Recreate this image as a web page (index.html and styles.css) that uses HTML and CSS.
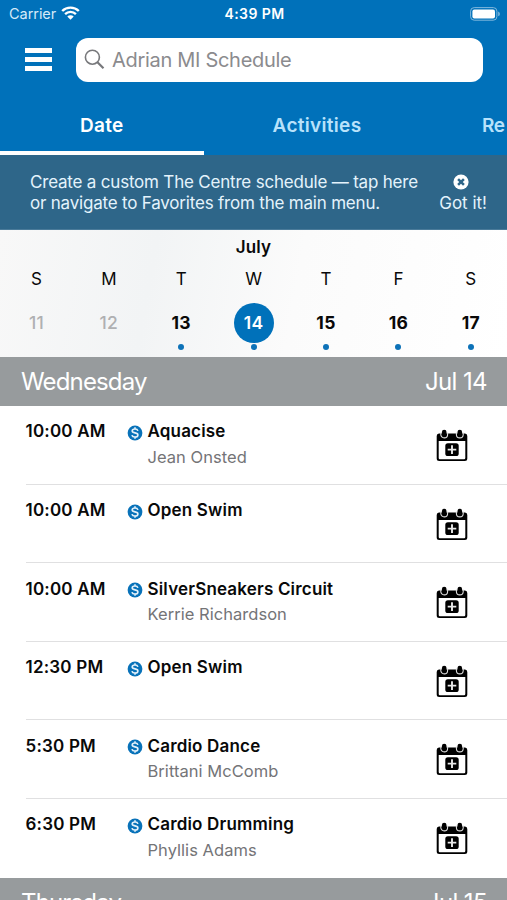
FILE: index.html
```html
<!DOCTYPE html>
<html lang="en">
<head>
<meta charset="utf-8">
<title>Schedule</title>
<link rel="stylesheet" href="styles.css">
</head>
<body>
<svg class="defs" width="0" height="0" aria-hidden="true">
  <symbol id="cal" viewBox="0 0 32 34">
    <path fill="#000" fill-rule="evenodd" d="M3 4.500H29Q31.300 4.500 31.300 7V29.500Q31.300 32 28.800 32H3.200Q.7 32 .7 29.500V7Q.7 4.500 3 4.500ZM2.700 11.900V29Q2.700 30.200 3.900 30.200H28.100Q29.300 30.200 29.300 29V11.900Z"/>
    <path fill="none" stroke="#ddd" stroke-width="1.100" d="M4.800 3.500V5.500A3.400 3.400 0 0 0 11.600 5.500V3.500M20.400 3.500V5.500A3.400 3.400 0 0 0 27.200 5.500V3.500"/>
    <rect x="5.900" y=".8" width="4.600" height="6.800" rx="2.300" fill="#000"/>
    <rect x="21.500" y=".8" width="4.600" height="6.800" rx="2.300" fill="#000"/>
    <rect x="9.300" y="14.200" width="13.400" height="12.800" rx="2.600" fill="#000"/>
    <path stroke="#e8e8e8" stroke-width="1.900" d="M16 16.300V24.900M11.700 20.600H20.300"/>
  </symbol>
  <symbol id="fee" viewBox="0 0 16 16">
    <circle cx="8" cy="8" r="7.400" fill="#0872b9"/>
    <path fill="none" stroke="#e4f1fa" stroke-width="1.600" d="M10.900 5.900C10.500 4.500 9.400 4 8 4C6.300 4 5.200 4.900 5.200 6C5.200 8.600 10.900 7.200 10.900 9.900C10.900 11.300 9.700 12 8 12C6.400 12 5.300 11.400 5 10.100M8 2.200V4.300M8 11.700V13.800"/>
  </symbol>
</svg>
<header class="top">
  <div class="status">
    <div class="carrier"><span>Carrier</span>
      <svg width="19" height="14" viewBox="0 0 19 14"><g fill="none" stroke="#fff" stroke-width="2.400"><path d="M1.200 5A11.800 11.800 0 0 1 17.800 5M4.100 8.100A7.700 7.700 0 0 1 14.900 8.100"/></g><path fill="#fff" d="M9.500 13.800L6.300 10.500A4.500 4.500 0 0 1 12.700 10.500Z"/></svg>
    </div>
    <div class="clock">4:39 PM</div>
    <svg class="battery" width="31" height="14" viewBox="0 0 31 14"><rect x=".6" y=".6" width="26.300" height="12.600" rx="3.600" fill="none" stroke="#7fb7dc"/><rect x="2.400" y="2.400" width="22.600" height="9" rx="2" fill="#fff"/><path fill="#7fb7dc" d="M28.200 4.500Q29.900 5.300 29.900 6.900T28.200 9.300Z"/></svg>
  </div>
  <div class="searchrow">
    <div class="menu"><i></i><i></i><i></i></div>
    <div class="search">
      <svg width="21" height="21" viewBox="0 0 21 21"><g fill="none" stroke="#77787b" stroke-width="1.600"><circle cx="8.400" cy="8.200" r="7"/><path stroke-width="2.200" d="M13.500 13.300L19.500 19.300"/></g></svg>
      <span>Adrian MI Schedule</span>
    </div>
  </div>
  <nav class="tabs">
    <div class="tab on">Date</div>
    <div class="tab mid">Activities</div>
    <div class="tab last">Re</div>
  </nav>
</header>
<section class="notice">
  <p>Create a custom The Centre schedule — tap here<br>or navigate to Favorites from the main menu.</p>
  <div class="got">
    <svg width="16" height="16" viewBox="0 0 16 16"><circle cx="8" cy="8" r="7.600" fill="#fff"/><path stroke="#2e6689" stroke-width="2.500" d="M5.100 5.100L10.900 10.900M10.900 5.100L5.100 10.900"/></svg>
    <span>Got it!</span>
  </div>
</section>
<section class="calendar">
  <div class="month">July</div>
  <div class="week names"><span>S</span><span>M</span><span>T</span><span>W</span><span>T</span><span>F</span><span>S</span></div>
  <div class="week days"><span class="off">11</span><span class="off">12</span><span>13</span><span><b>14</b></span><span>15</span><span>16</span><span>17</span></div>
  <div class="week dots"><span></span><span></span><span><i></i></span><span><i></i></span><span><i></i></span><span><i></i></span><span><i></i></span></div>
</section>
<div class="dayhead"><span>Wednesday</span><span>Jul 14</span></div>
<main>
  <article class="row"><div class="time">10:00 AM</div><svg class="fee"><use href="#fee"/></svg><div class="info"><h2>Aquacise</h2><p>Jean Onsted</p></div><svg class="cal"><use href="#cal"/></svg></article>
  <article class="row"><div class="time">10:00 AM</div><svg class="fee"><use href="#fee"/></svg><div class="info"><h2>Open Swim</h2></div><svg class="cal"><use href="#cal"/></svg></article>
  <article class="row"><div class="time">10:00 AM</div><svg class="fee"><use href="#fee"/></svg><div class="info"><h2>SilverSneakers Circuit</h2><p>Kerrie Richardson</p></div><svg class="cal"><use href="#cal"/></svg></article>
  <article class="row"><div class="time">12:30 PM</div><svg class="fee"><use href="#fee"/></svg><div class="info"><h2>Open Swim</h2></div><svg class="cal"><use href="#cal"/></svg></article>
  <article class="row"><div class="time">5:30 PM</div><svg class="fee"><use href="#fee"/></svg><div class="info"><h2>Cardio Dance</h2><p>Brittani McComb</p></div><svg class="cal"><use href="#cal"/></svg></article>
  <article class="row"><div class="time">6:30 PM</div><svg class="fee"><use href="#fee"/></svg><div class="info"><h2>Cardio Drumming</h2><p>Phyllis Adams</p></div><svg class="cal"><use href="#cal"/></svg></article>
</main>
<div class="dayhead"><span>Thursday</span><span>Jul 15</span></div>
</body>
</html>
```
FILE: styles.css
```css
* { box-sizing: border-box; margin: 0; padding: 0; }
html, body { height: 900px; overflow: hidden; }
body { font-family: Inter, "Liberation Sans", sans-serif; background: #fff; color: #090909; white-space: nowrap; }
svg { display: block; flex: none; }
.defs { position: absolute; }
.top { background: #0071ba; height: 155px; color: #fff; }
.status { display: grid; grid-template-columns: 1fr auto 1fr; height: 28px; align-items: center; padding: 0 6px 0 9px; font-size: 14.5px; }
.carrier { display: flex; align-items: center; gap: 5px; color: #d5eaf8; letter-spacing: -.05px; }
.carrier span { margin-top: -1px; }
.carrier svg { margin-top: -2px; }
.clock { font-weight: 600; font-size: 14px; letter-spacing: .4px; margin: -1px 0 0 -1px; }
.battery { justify-self: end; margin-top: -1px; }
.searchrow { display: flex; align-items: center; height: 64px; padding-left: 25px; }
.menu { width: 27px; display: grid; gap: 4.500px; margin-top: -1px; }
.menu i { height: 4.400px; background: #fff; }
.search { margin-left: 23.500px; width: 407px; height: 44px; border-radius: 12px; background: #fff; display: flex; align-items: center; padding-left: 8.500px; gap: 7px; color: #8b8b8e; font-size: 20px; letter-spacing: -.3px; }
.search svg { margin-top: -2px; }
.tabs { display: flex; height: 63px; font-size: 19px; font-weight: 600; letter-spacing: .3px; color: #b8e2fb; overflow: hidden; }
.tab { flex: none; height: 63px; line-height: 67px; text-align: center; }
.on { width: 203.500px; color: #fff; border-bottom: 4px solid #fff; }
.mid { width: 227px; }
.last { padding-left: 51.500px; letter-spacing: -.3px; }
.notice { height: 75px; background: #2e6689; color: #e4f3fc; display: flex; padding: 17px 20px 0 30px; justify-content: space-between; font-size: 17px; letter-spacing: -.2px; line-height: 20.500px; border-bottom: 1px solid #4a7b9a; }
.got { display: flex; flex-direction: column; align-items: center; gap: 2px; letter-spacing: 0; }
.got svg { margin: 1.500px 0 1px -5px; }
.calendar { height: 127px; background: linear-gradient(100deg, #f8f8f8, #f2f4f5 30%, #fbfbfb 58%, #fff); font-size: 17px; text-align: center; }
.month { font-weight: 600; height: 35px; line-height: 35px; letter-spacing: .2px; }
.week { display: grid; grid-template-columns: repeat(7, 72.400px); }
.week span { display: flex; justify-content: center; align-items: center; padding-left: .5px; }
.names { height: 28px; }
.days { height: 60px; font-weight: 650; letter-spacing: .3px; font-size: 17.500px; line-height: 22px; }
.days span { padding-bottom: 1px; }
.days .off { color: #afb0b2; font-weight: 500; }
.days b { width: 40px; height: 40px; line-height: 40px; border-radius: 50%; background: #0071ba; color: #fff; font-weight: 600; }
.dots { margin-top: -9px; height: 6px; }
.dots i { width: 6px; height: 6px; border-radius: 50%; background: #0d72b8; }
.dayhead { height: 49px; background: #979b9d; color: #fff; font-size: 24px; line-height: 50px; font-weight: 400; letter-spacing: -.85px; display: flex; justify-content: space-between; padding: 0 20px 0 21px; }
.dayhead span:last-child { letter-spacing: -.6px; }
.row { height: 78.600px; margin-left: 26px; border-bottom: 1.500px solid #e0e0e1; display: flex; align-items: flex-start; }
.row:last-child { border: 0; }
.time { width: 101px; margin-top: 15.400px; font-size: 17px; font-weight: 600; letter-spacing: .2px; line-height: 21px; text-indent: -.5px; }
.fee { width: 16px; height: 16px; margin-top: 19px; }
.info { flex: 1; margin: 15.400px 0 0 4.500px; }
.info h2 { font-size: 17px; font-weight: 600; letter-spacing: .18px; line-height: 21px; }
.info p { font-size: 16.500px; line-height: 21px; margin-top: 4.600px; color: #747477; letter-spacing: .04px; }
.cal { width: 32px; height: 34px; margin: 23px 39px 0 0; }
```
